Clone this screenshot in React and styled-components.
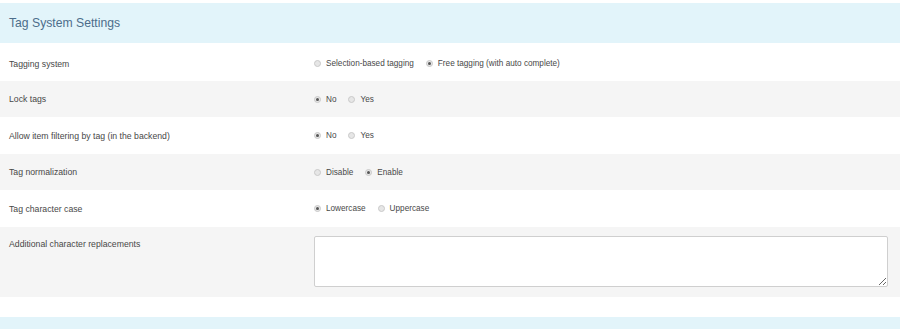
import React from "react";
import styled, { createGlobalStyle } from "styled-components";

const Global = createGlobalStyle`
  html, body { margin: 0; padding: 0; background: #fff; }
  body { font-family: "Liberation Sans", Arial, sans-serif; }
`;

const Page = styled.div`
  padding-top: 3px;
  width: 900px;
`;

const Header = styled.div`
  background: #e2f4fa;
  height: 40px;
  display: flex;
  align-items: center;
  padding-left: 9px;
  font-size: 12.2px;
  color: #4d6d8a;
`;

const Row = styled.div`
  display: grid;
  grid-template-columns: 305px 1fr;
  align-items: ${(p) => (p.$top ? "start" : "center")};
  min-height: ${(p) => p.$h}px;
  background: ${(p) => (p.$alt ? "#f5f5f5" : "#fff")};
  padding: ${(p) => (p.$top ? "9px 12px 10px 9px" : `${p.$pt || 0}px 12px 0 9px`)};
  box-sizing: border-box;
  font-size: 8.7px;
  color: #484848;
`;

const Label = styled.div`
  padding-top: ${(p) => (p.$top ? "3px" : "0")};
`;

const Options = styled.div`
  display: flex;
  align-items: center;
  gap: 12px;
  font-size: 8.2px;
`;

const Option = styled.label`
  display: flex;
  align-items: center;
  gap: 5px;
`;

const Dot = styled.span`
  width: 7px;
  height: 7px;
  border-radius: 50%;
  box-sizing: border-box;
  border: 1px solid #c9c9c9;
  background: #e6e6e6;
  display: inline-flex;
  align-items: center;
  justify-content: center;
  &::after {
    content: "";
    width: 3px;
    height: 3px;
    border-radius: 50%;
    background: ${(p) => (p.$on ? "#555" : "transparent")};
  }
`;

const Area = styled.textarea`
  display: block;
  width: 100%;
  height: 51px;
  box-sizing: border-box;
  border: 1px solid #cfcfcf;
  border-radius: 2px;
  background: #fff;
  resize: vertical;
  font-family: inherit;
`;

const Spacer = styled.div`
  height: 20px;
`;

const Footer = styled.div`
  height: 12px;
  background: #e2f4fa;
`;

const Radios = ({ items, selected }) => (
  <Options>
    {items.map((t, i) => (
      <Option key={t}>
        <Dot $on={i === selected} />
        {t}
      </Option>
    ))}
  </Options>
);

export default function App() {
  return (
    <Page>
      <Global />
      <Header>Tag System Settings</Header>
      <Row $h={38} $pt={3}>
        <Label>Tagging system</Label>
        <Radios items={["Selection-based tagging", "Free tagging (with auto complete)"]} selected={1} />
      </Row>
      <Row $h={36} $alt>
        <Label>Lock tags</Label>
        <Radios items={["No", "Yes"]} selected={0} />
      </Row>
      <Row $h={37}>
        <Label>Allow item filtering by tag (in the backend)</Label>
        <Radios items={["No", "Yes"]} selected={0} />
      </Row>
      <Row $h={36} $alt>
        <Label>Tag normalization</Label>
        <Radios items={["Disable", "Enable"]} selected={1} />
      </Row>
      <Row $h={37}>
        <Label>Tag character case</Label>
        <Radios items={["Lowercase", "Uppercase"]} selected={0} />
      </Row>
      <Row $h={70} $alt $top>
        <Label $top>Additional character replacements</Label>
        <Area />
      </Row>
      <Spacer />
      <Footer />
    </Page>
  );
}
